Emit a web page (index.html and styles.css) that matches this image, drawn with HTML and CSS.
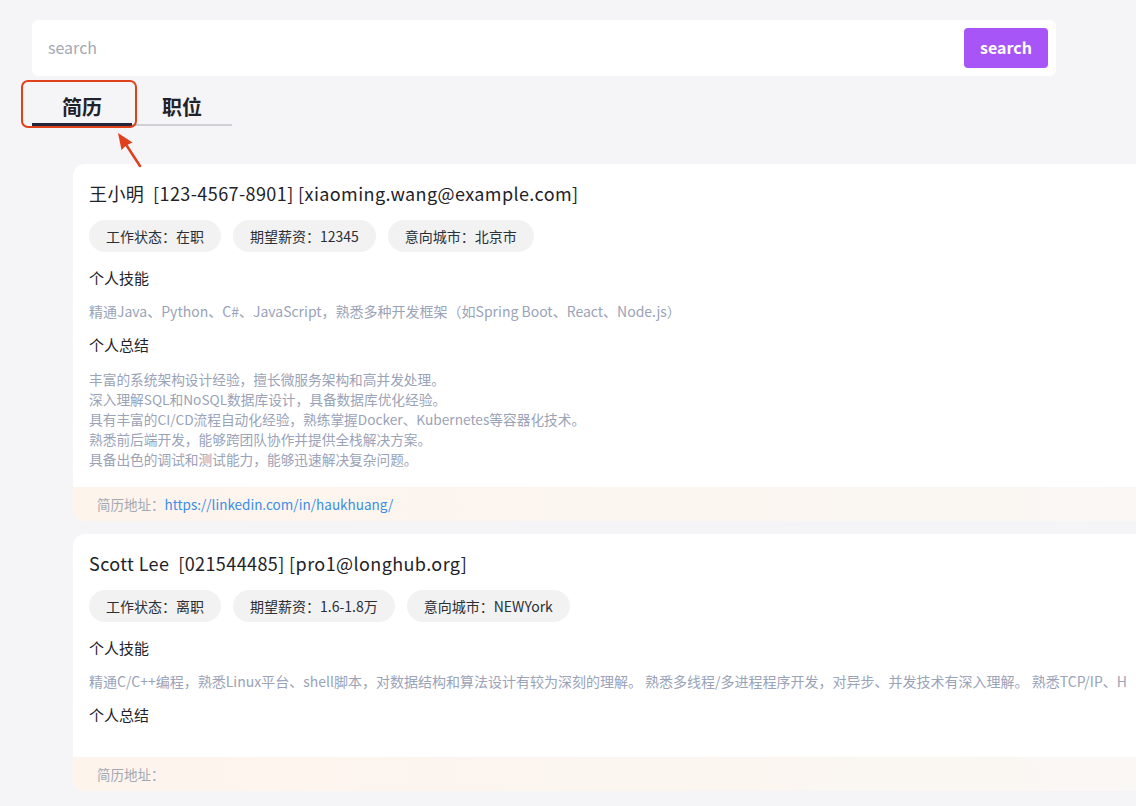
FILE: index.html
```html
<!DOCTYPE html>
<html lang="zh">
<head>
<meta charset="utf-8">
<title>简历</title>
<link rel="stylesheet" href="styles.css">
</head>
<body>
<div class="page">
  <div class="search-bar">
    <input class="search-input" type="text" placeholder="search">
    <button class="search-btn">search</button>
  </div>

  <div class="tabs-wrap">
    <div class="tabs">
      <div class="tab active">简历</div>
      <div class="tab">职位</div>
    </div>
    <div class="annot-box"></div>
    <svg class="annot-arrow" width="40" height="50" viewBox="0 0 40 50">
      <line x1="28" y1="40" x2="13" y2="17" stroke="#e0401a" stroke-width="2.5" stroke-linecap="round"/>
      <polygon points="6,7 20.5,16.5 14,19.5 9.5,24" fill="#e0401a"/>
    </svg>
  </div>

  <div class="list">
    <div class="card">
      <div class="card-body">
        <div class="name">王小明&nbsp;&nbsp;[123-4567-8901] [xiaoming.wang@example.com]</div>
        <div class="tags">
          <span class="tag">工作状态：在职</span>
          <span class="tag">期望薪资：12345</span>
          <span class="tag">意向城市：北京市</span>
        </div>
        <div class="sec-title">个人技能</div>
        <div class="skills">精通Java、Python、C#、JavaScript，熟悉多种开发框架（如Spring Boot、React、Node.js）</div>
        <div class="sec-title">个人总结</div>
        <div class="summary">丰富的系统架构设计经验，擅长微服务架构和高并发处理。<br>深入理解SQL和NoSQL数据库设计，具备数据库优化经验。<br>具有丰富的CI/CD流程自动化经验，熟练掌握Docker、Kubernetes等容器化技术。<br>熟悉前后端开发，能够跨团队协作并提供全栈解决方案。<br>具备出色的调试和测试能力，能够迅速解决复杂问题。</div>
      </div>
      <div class="card-foot">简历地址：<a class="link" href="#">https://linkedin.com/in/haukhuang/</a></div>
    </div>

    <div class="card">
      <div class="card-body">
        <div class="name">Scott Lee&nbsp;&nbsp;[021544485] [pro1@longhub.org]</div>
        <div class="tags">
          <span class="tag">工作状态：离职</span>
          <span class="tag">期望薪资：1.6-1.8万</span>
          <span class="tag">意向城市：NEWYork</span>
        </div>
        <div class="sec-title">个人技能</div>
        <div class="skills">精通C/C++编程，熟悉Linux平台、shell脚本，对数据结构和算法设计有较为深刻的理解。 熟悉多线程/多进程程序开发，对异步、并发技术有深入理解。 熟悉TCP/IP、H</div>
        <div class="sec-title">个人总结</div>
        <div class="summary"></div>
      </div>
      <div class="card-foot">简历地址：</div>
    </div>
  </div>
</div>
</body>
</html>
```

FILE: styles.css
```css
html, body {
  margin: 0;
  padding: 0;
  overflow: hidden;
}
body {
  background: #f5f5f7;
  font-family: "Noto Sans CJK SC", "Noto Sans", sans-serif;
  color: #1f2329;
  width: 1136px;
  height: 806px;
}
.page {
  padding: 20px 0 0 32px;
}
.search-bar {
  width: 1024px;
  height: 56px;
  background: #fff;
  border-radius: 6px;
  display: flex;
  align-items: center;
  padding: 0 8px 0 16px;
  box-sizing: border-box;
}
.search-input {
  flex: 1;
  border: none;
  outline: none;
  font-family: "Noto Sans CJK SC", sans-serif;
  font-size: 16px;
  line-height: 22px;
  height: 22px;
  margin-top: -2px;
  color: #333;
  background: transparent;
  padding: 0;
}
.search-input::placeholder {
  color: #a3a8b3;
}
.search-btn {
  width: 84px;
  height: 40px;
  border: none;
  border-radius: 4px;
  background: #a855f7;
  color: #fff;
  font-family: "Noto Sans CJK SC", sans-serif;
  font-weight: 700;
  font-size: 16px;
  padding: 0 0 2px;
}
.tabs-wrap {
  position: relative;
  margin-top: 12px;
  height: 76px;
}
.tabs {
  display: flex;
}
.tab {
  width: 100px;
  height: 36px;
  text-align: center;
  font-size: 20px;
  font-weight: 700;
  line-height: 38px;
  color: #1f2329;
  border-bottom: 2px solid #d0d0d4;
  box-sizing: content-box;
}
.tab.active {
  border-bottom: 3px solid #23263a;
  height: 35px;
}
.annot-box {
  position: absolute;
  left: -11px;
  top: -8px;
  width: 112px;
  height: 44px;
  border: 2px solid #e0401a;
  border-radius: 7px;
}
.annot-arrow {
  position: absolute;
  left: 80px;
  top: 38px;
}
.list {
  margin-left: 41px;
  display: flex;
  flex-direction: column;
  gap: 13px;
}
.card {
  width: 1200px;
  background: #fff;
  border-radius: 12px;
  overflow: hidden;
}
.card-body {
  padding: 15px 16px 18px;
}
.name {
  font-size: 18px;
  line-height: 28px;
  color: #1f2329;
  white-space: nowrap;
  letter-spacing: 0.4px;
}
.tags {
  display: flex;
  gap: 12px;
  margin-top: 13px;
}
.tag {
  height: 32px;
  line-height: 32px;
  padding: 0 17px;
  border-radius: 16px;
  background: #f2f2f3;
  font-size: 14px;
  color: #2b2f36;
  white-space: nowrap;
}
.sec-title {
  margin-top: 14px;
  font-size: 15px;
  line-height: 24px;
  color: #1f2329;
}
.skills {
  margin-top: 11px;
  font-size: 14px;
  line-height: 20px;
  color: #9aa3b8;
  white-space: nowrap;
}
.skills + .sec-title {
  margin-top: 12px;
}
.summary {
  margin-top: 12px;
  font-size: 13.7px;
  line-height: 20px;
  color: #9aa3b8;
}
.card-foot {
  height: 34px;
  line-height: 34px;
  padding-left: 24px;
  font-size: 13.5px;
  color: #a3a8b3;
  background: linear-gradient(90deg, #fdf4ec 0%, #fbf6f1 60%, #f9f8f6 100%);
}
.link {
  color: #3a8ee6;
  text-decoration: none;
}
```
